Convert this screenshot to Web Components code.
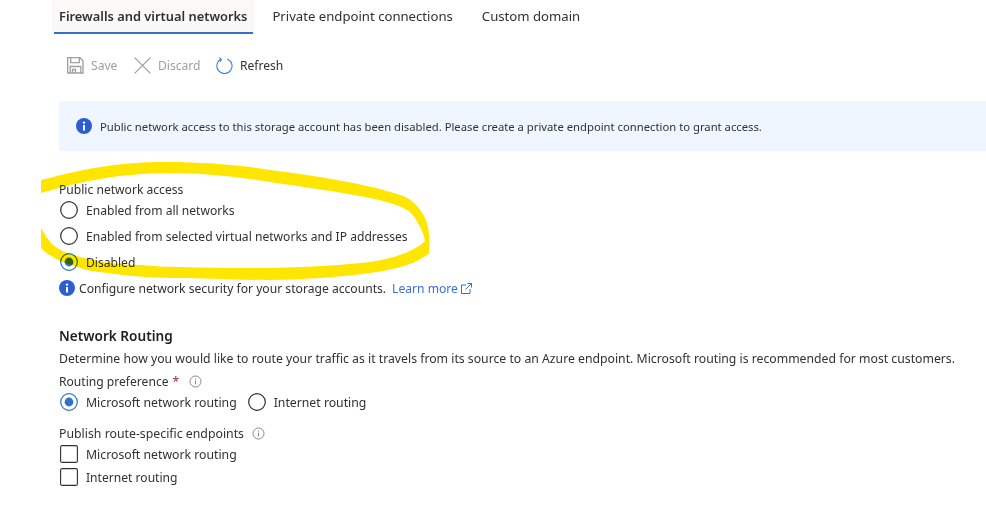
<!DOCTYPE html>
<html>
<head>
<meta charset="utf-8">
<title>Networking</title>
<style>
  html, body { margin: 0; background: #fff; }
  body { width: 986px; height: 513px; overflow: hidden; position: relative; font: 12.1px "Noto Sans", "Open Sans", sans-serif; color: #323130; }
</style>
</head>
<body>
<network-page></network-page>
<marker-scribble></marker-scribble>

<script>
const infoSolid = `<svg width="16" height="16" viewBox="0 0 16 16"><circle cx="8" cy="8" r="8" fill="#2b5fd0"/><rect x="7" y="7" width="2" height="5.5" fill="#fff"/><circle cx="8" cy="4.6" r="1.2" fill="#fff"/></svg>`;
const infoOutline = `<svg width="13" height="13" viewBox="0 0 13 13"><circle cx="6.5" cy="6.5" r="5.5" fill="none" stroke="#8a8886"/><rect x="6" y="5.6" width="1" height="3.8" fill="#8a8886"/><rect x="6" y="3.5" width="1" height="1.1" fill="#8a8886"/></svg>`;

class AzTabs extends HTMLElement {
    constructor() {
        super();
        this.attachShadow({ mode: 'open' });
        this.shadowRoot.innerHTML = `
      <style>
        :host { display: flex; height: 34px; padding-left: 52px; font-size: 13.15px; }
        .tab { display: flex; align-items: center; height: 32px; }
        .on { background: #faf9f8; font-size: 12.85px; font-weight: 600; position: relative; padding: 0 8px 0 7px; }
        .on::after { content: ''; position: absolute; left: 2px; right: 2px; bottom: -2px; height: 2px; background: #2f72c8; }
      </style>
      <div class="tab on">Firewalls and virtual networks</div>
      <div class="tab" style="margin-left:17px">Private endpoint connections</div>
      <div class="tab" style="margin-left:29px">Custom domain</div>
    `;
    }
}

class AzToolbar extends HTMLElement {
    constructor() {
        super();
        this.attachShadow({ mode: 'open' });
        this.shadowRoot.innerHTML = `
      <style>
        :host { display: flex; align-items: center; height: 32px; margin-top: 15px; padding-left: 67px; }
        .btn { display: flex; align-items: center; gap: 7px; }
        .off { color: #a19f9d; }
        svg { display: block; }
      </style>
      <div class="btn off" style="width:67px">
        <svg width="17" height="17" viewBox="0 0 17 17" fill="none" stroke="#a19f9d" stroke-width="1.3"><path d="M.7.7H13L16 3.7V16H.7z"/><path d="M3.7.7v5h8.6v-5M3.2 16V9.5h10.6V16"/><path d="M5.5 16v-3.5h3V16"/></svg>
        Save
      </div>
      <div class="btn off" style="width:82px">
        <svg width="17" height="17" viewBox="0 0 17 17" fill="none" stroke="#a19f9d" stroke-width="1.3"><path d="M.6.6l15.8 15.8M16.4.6L.6 16.4"/></svg>
        Discard
      </div>
      <div class="btn">
        <svg width="17" height="17" viewBox="0 0 17 17" fill="none" stroke="#3b7fd4" stroke-width="1.1"><path d="M5 2.2A7.6 7.6 0 1 0 11.2 1.9"/><path d="M3.4.6 5.3 2.4 4.3 4.8"/></svg>
        Refresh
      </div>
    `;
    }
}

class AzBanner extends HTMLElement {
    constructor() {
        super();
        this.attachShadow({ mode: 'open' });
        this.shadowRoot.innerHTML = `
      <style>
        :host { display: flex; align-items: center; gap: 8px; height: 50px; margin: 20px 0 0 59px; padding-left: 17px; background: #f0f6ff; font-size: 11.27px; }
        svg { display: block; }
      </style>
      ${infoSolid}<span><slot></slot></span>
    `;
    }
}

class AzOption extends HTMLElement {
    constructor() {
        super();
        this.attachShadow({ mode: 'open' });
    }

    connectedCallback() {
        const type = this.getAttribute('type') || 'radio';
        const checked = this.hasAttribute('checked');
        const box = type === 'check'
            ? `<svg width="18" height="18" viewBox="0 0 18 18"><rect x=".6" y=".6" width="16.8" height="16.8" rx="1.5" fill="#fff" stroke="#323130" stroke-width="1.1"/></svg>`
            : `<svg width="18" height="18" viewBox="0 0 18 18"><circle cx="9" cy="9" r="8.3" fill="#fff" stroke="${checked ? '#2f72c8' : '#323130'}" stroke-width="1.2"/>${checked ? '<circle cx="9" cy="9" r="4.4" fill="#2f72c8"/>' : ''}</svg>`;
        this.shadowRoot.innerHTML = `
      <style>
        :host { display: flex; align-items: center; gap: 8px; height: 18px; margin-left: 1px; }
        svg { display: block; flex: none; }
      </style>
      ${box}<span><slot></slot></span>
    `;
    }
}

class AzLabel extends HTMLElement {
    constructor() {
        super();
        this.attachShadow({ mode: 'open' });
    }

    connectedCallback() {
        this.shadowRoot.innerHTML = `
      <style>
        :host { display: flex; align-items: center; height: 18px; }
        .req { color: #a4262c; margin-left: 4px; }
        svg { display: block; margin-left: ${this.hasAttribute('required') ? 10 : 8}px; }
      </style>
      <span><slot></slot></span>
      ${this.hasAttribute('required') ? '<span class="req">*</span>' : ''}
      ${this.hasAttribute('info') ? infoOutline : ''}
    `;
    }
}

class NetworkPage extends HTMLElement {
    constructor() {
        super();
        this.attachShadow({ mode: 'open' });
        this.shadowRoot.innerHTML = `
      <style>
        :host { display: block; }
        .form { display: flex; flex-direction: column; padding-left: 59px; margin-top: 29px; }
        .opts { display: flex; flex-direction: column; gap: 8px; }
        .row { display: flex; align-items: center; gap: 10px; font-size: 12.25px; }
        .hint { display: flex; align-items: center; gap: 4px; height: 18px; margin-top: 8px; font-size: 12.14px; }
        .hint svg { display: block; }
        a { color: #3a6fd8; text-decoration: none; display: inline-flex; align-items: center; gap: 3px; margin-left: 2px; font-size: 12.1px; }
        h2 { font-size: 13.6px; font-weight: 600; margin: 30px 0 0; height: 18px; line-height: 18px; color: #201f1e; }
        p { margin: 5px 0 0; height: 18px; line-height: 18px; font-size: 12.24px; }
      </style>
      <az-tabs></az-tabs>
      <az-toolbar></az-toolbar>
      <az-banner>Public network access to this storage account has been disabled. Please create a private endpoint connection to grant access.</az-banner>
      <div class="form">
        <az-label>Public network access</az-label>
        <div class="opts" style="margin-top:3px">
          <az-option>Enabled from all networks</az-option>
          <az-option>Enabled from selected virtual networks and IP addresses</az-option>
          <az-option checked>Disabled</az-option>
        </div>
        <div class="hint">
          ${infoSolid}
          <span>Configure network security for your storage accounts.</span>
          <a href="#">Learn more
            <svg width="11" height="11" viewBox="0 0 11 11" fill="none" stroke="#3a6fd8"><path d="M5 2H.5v8.5H9V6M6.5.5h4v4M10.5.5l-6 6"/></svg>
          </a>
        </div>
        <h2>Network Routing</h2>
        <p>Determine how you would like to route your traffic as it travels from its source to an Azure endpoint. Microsoft routing is recommended for most customers.</p>
        <az-label required info style="margin-top:4px">Routing preference</az-label>
        <div class="row" style="margin-top:3px">
          <az-option checked>Microsoft network routing</az-option>
          <az-option>Internet routing</az-option>
        </div>
        <az-label info style="margin-top:13px;font-size:12.3px">Publish route-specific endpoints</az-label>
        <az-option type="check" style="margin-top:3px;font-size:12.25px">Microsoft network routing</az-option>
        <az-option type="check" style="margin-top:5px">Internet routing</az-option>
      </div>
    `;
    }
}

// yellow hand drawn circle sits on top of the form
class MarkerScribble extends HTMLElement {
    constructor() {
        super();
        this.attachShadow({ mode: 'open' });
        this.shadowRoot.innerHTML = `
      <style>
        :host { position: absolute; left: 0; top: 0; width: 986px; height: 513px; pointer-events: none; mix-blend-mode: multiply; }
      </style>
      <svg width="986" height="513" viewBox="0 0 986 513">
        <path fill="#ffe600" d="M41 180C90 167 125 162 165 162C205 162 240 165 270 170C310 175 370 184 403 196C412 199 421 209 425 218C428 225 429 231 429 237L429 253C420 262 400 269 370 273C340 277 300 280 270 280C235 280 200 278 180 278C160 278 140 277 123 275C108 273 97 272 87 270C80 268 70 264 60 261C52 257 46 253 41 248L41 228C45 235 49 241 53 245C60 250 66 253 73 255C80 257 95 261 110 263C120 264 130 265 140 265C155 266 165 267 180 267C210 268 240 268 270 268C310 267 345 265 370 262C395 258 415 251 425 241C424 235 422 231 420 227C417 221 414 216 410 212C400 205 385 201 370 198C340 192 305 187 270 182C240 177 205 173 165 173C120 174 85 180 41 193Z"/>
      </svg>
    `;
    }
}

customElements.define('az-tabs', AzTabs);
customElements.define('az-toolbar', AzToolbar);
customElements.define('az-banner', AzBanner);
customElements.define('az-option', AzOption);
customElements.define('az-label', AzLabel);
customElements.define('network-page', NetworkPage);
customElements.define('marker-scribble', MarkerScribble);
</script>
</body>
</html>
